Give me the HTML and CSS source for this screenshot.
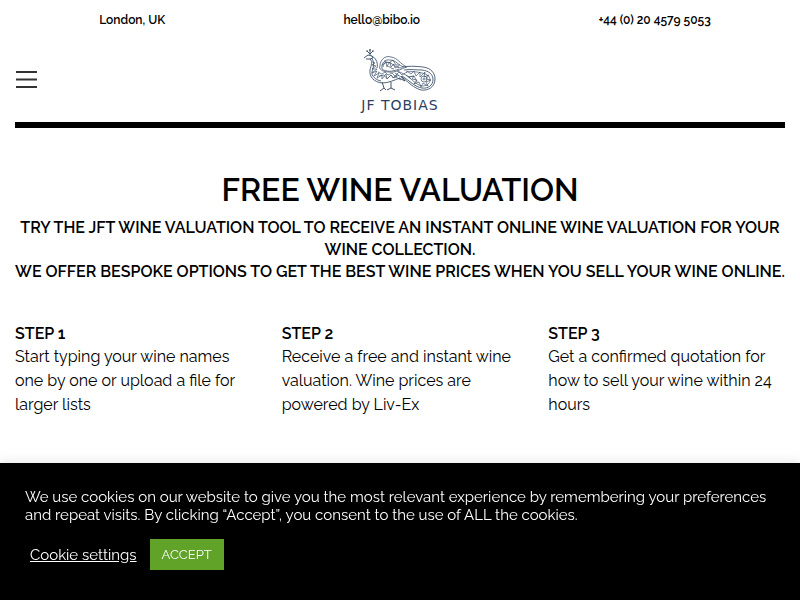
FILE: index.html
```html
<!DOCTYPE html>
<html lang="en">
<head>
    <meta charset="UTF-8">
    <meta name="viewport" content="width=device-width, initial-scale=1.0">
    <title>Free Wine Valuation - JF Tobias</title>
    <link rel="stylesheet" href="styles.css">
</head>
<body>
    <header class="container">
        <div class="top-bar">
            <span>London, UK</span>
            <a href="mailto:hello@bibo.io">hello@bibo.io</a>
            <a href="tel:+4402045795053">+44 (0) 20 4579 5053</a>
        </div>
        <div class="nav-bar">
            <button class="menu-btn" type="button" aria-label="Menu">
                <svg width="22" height="18" viewBox="0 0 22 18"><path d="M0 2h21M0 9.500h21M0 17h21" stroke="#333" stroke-width="2"/></svg>
            </button>
            <a class="logo" href="#">
                <svg class="peacock" width="72" height="44" viewBox="0 0 72 44" fill="none" stroke="#42566f" stroke-width=".7">
                    <!-- crest and head -->
                    <path d="M3 2l3 3M6 0v6M9 2L6 5M2 2h2M5 1h2M8 2h2M0 9l4-3 4 1 1 2-3 1H2" stroke-width="1"/>
                    <!-- neck, breast and belly -->
                    <path d="M6 10c3 3 1 6 0 11-1 7 4 12 12 13 7 0 12-3 18-5M8 7c5 3 6 8 5 12M8 10c3 4 1 9 0 13s4 8 9 9" stroke-width=".9"/>
                    <path d="M8 13l3 1-3 2 4 1-4 3 5 0-5 4 5-2-3 5 5-3-2 5 5-3 0 4 4-5 1 5 4-4 2 3 4-3"/>
                    <!-- wing -->
                    <path d="M16 17c0-6 5-11 11-9 7 1 9 7 16 10-7 2-11 6-18 5-6 0-11-3-9-6zM18 20c-1-6 3-10 8-9 6 0 9 6 14 7M19 18c0-5 6-6 9-3 3 2 6 4 10 4M18 20c4 3 10 3 17 0M22 17c4 0 5 3 8 3" stroke-width=".8"/>
                    <path d="M18 16l4-3 1 4 3-4 1 5 3-3 1 4 4-2M14 23l4 2 3-2 3 3 4-2 3 3 4-4 3 3 5-3M15 27l5-1 3 4 4-4 3 3 5-3M20 12l5 2 4-3 3 5 4 0"/>
                    <path d="M33 22c6 2 11 5 14 8M31 24l9 6M30 27l7 4"/>
                    <!-- tail -->
                    <path d="M38 18c6-1 13-1 21 0 8 1 12 6 12 12 0 8-7 12-14 11-7-2-12-7-20-14M40 21c7-1 12 0 18 0 7 1 11 4 11 10 0 5-5 9-11 8-7-1-12-7-20-12" stroke-width=".9"/>
                    <path d="M42 23c6-1 12 0 16 1 5 1 8 3 8 7 0 4-4 6-8 6-6-1-10-7-16-11"/>
                    <path d="M43 22l4 3 3-3 2 5 4-4 0 5 5-5-1 5 5-2-3 4 5 1-5 2 2 4-5-3-2 4-2-5-5 2 3-4-5-1 2-3-6 1M45 28l5-1 3 6"/>
                    <circle cx="60" cy="30" r="3"/>
                    <circle cx="60" cy="30" r="1"/>
                    <!-- legs -->
                    <path d="M18 33l2 6-4 3M20 39l2 2M27 33l0 6-4 2M27 39l4 2M35 29l6 3-3-4" stroke-width="1"/>
                </svg>
                <span class="logo-text">JF TOBIAS</span>
            </a>
        </div>
    </header>
    <main class="container">
        <h1>Free Wine Valuation</h1>
        <h2 class="intro">Try the JFT wine valuation tool to receive an instant online wine valuation for your wine collection.<br>We offer bespoke options to get the best wine prices when you sell your wine online.</h2>
        <div class="steps">
            <div class="step">
                <h3>STEP 1</h3>
                <p>Start typing your wine names one by one or upload a file for larger lists</p>
            </div>
            <div class="step">
                <h3>STEP 2</h3>
                <p>Receive a free and instant wine valuation. Wine prices are powered by Liv-Ex</p>
            </div>
            <div class="step">
                <h3>STEP 3</h3>
                <p>Get a confirmed quotation for how to sell your wine within 24 hours</p>
            </div>
        </div>
    </main>
    <div class="cookie-bar">
        <p>We use cookies on our website to give you the most relevant experience by remembering your preferences and repeat visits. By clicking “Accept”, you consent to the use of ALL the cookies.</p>
        <div class="cookie-actions">
            <a href="#">Cookie settings</a>
            <button class="accept-btn" type="button">ACCEPT</button>
        </div>
    </div>
</body>
</html>
```

FILE: styles.css
```css
* {
    box-sizing: border-box;
}
body {
    font-family: Raleway, Lato, sans-serif;
    font-size: 16px;
    line-height: 24px;
    margin: 0;
    color: #000;
    background: #fff;
}
h1, h2, h3, p {
    margin: 0;
    font-weight: 600;
}
p {
    font-weight: 400;
}
.container {
    padding: 0 15px;
}
.top-bar {
    display: flex;
    justify-content: space-around;
    margin: 0 -15px 0 -5px;
    padding-top: 8px;
    font-size: 12px;
    font-weight: 600;
}
.top-bar a {
    color: #000;
    text-decoration: none;
}
.nav-bar {
    display: grid;
    grid-template-columns: 1fr auto 1fr;
    align-items: center;
    height: 96px;
    padding-top: 4px;
    border-bottom: 6px solid #000;
}
.menu-btn {
    justify-self: start;
    display: flex;
    padding: 0 1px;
    border: none;
    background: none;
    cursor: pointer;
}
.logo {
    display: flex;
    flex-direction: column;
    align-items: center;
    margin-top: 8px;
    color: #2c4060;
    text-decoration: none;
}
.logo-text {
    font-family: "DejaVu Sans", sans-serif;
    font-size: 14px;
    line-height: 24px;
    letter-spacing: 1px;
}
h1 {
    margin-top: 40px;
    font-size: 32px;
    line-height: 44px;
    text-align: center;
    text-transform: uppercase;
}
.intro {
    margin-top: 5px;
    font-size: 16px;
    line-height: 22px;
    text-align: center;
    text-transform: uppercase;
}
.steps {
    display: grid;
    grid-template-columns: repeat(3, 1fr);
    gap: 30px;
    margin-top: 40px;
}
.step h3 {
    font-size: 16px;
    line-height: 22px;
}
.cookie-bar {
    position: fixed;
    left: 0;
    right: 0;
    bottom: 0;
    padding: 25px 25px 30px;
    color: #fff;
    background: #000;
    box-shadow: 0 -1px 10px rgba(172, 171, 171, 0.3);
    font-size: 15px;
    line-height: 18px;
}
.cookie-actions {
    display: flex;
    align-items: center;
    gap: 13px;
    margin-top: 15px;
    padding-left: 5px;
}
.cookie-actions a {
    color: #fff;
}
.accept-btn {
    padding: 8px 12px;
    border: none;
    color: #fff;
    background: #61a229;
    font-family: inherit;
    font-size: 13px;
    line-height: 15px;
    cursor: pointer;
}
```
